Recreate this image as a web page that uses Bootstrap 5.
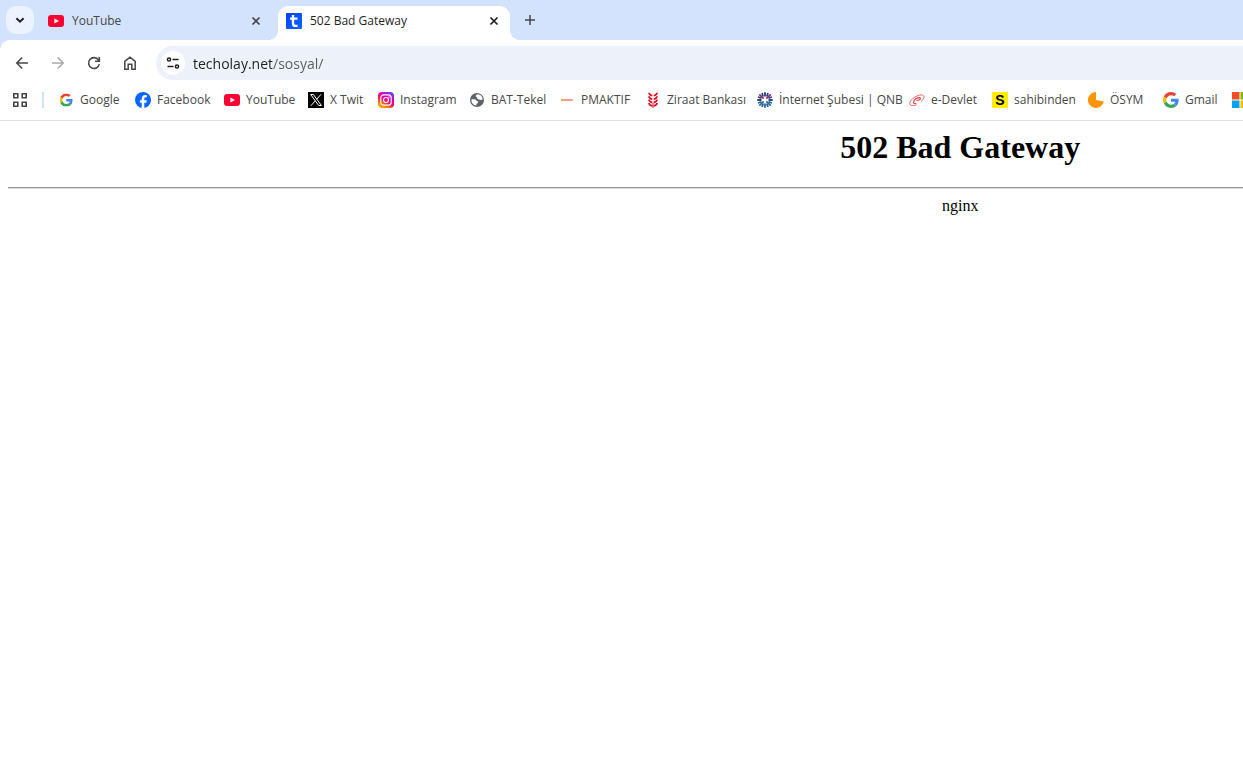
<!DOCTYPE html>
<html lang="tr">
<head>
<meta charset="utf-8">
<meta name="viewport" content="width=device-width, initial-scale=1">
<title>502 Bad Gateway</title>
<link href="https://cdn.jsdelivr.net/npm/bootstrap@5.3.0/dist/css/bootstrap.min.css" rel="stylesheet">
<style>
  body { font-family: "Open Sans", "Noto Sans", sans-serif; font-size: 12px; line-height: 16px; color: #1f1f1f; overflow-x: hidden; background: #fff; }
  svg { display: block; flex: none; }
  .plain-btn { border: 0; background: none; padding: 0; color: #474747; display: flex; align-items: center; justify-content: center; flex: none; }
  .strip { background: #d3e3fd; height: 40px; padding: 6px 6px 0; }
  .tab-search { width: 28px; height: 28px; border-radius: 10px; background: #ecf3fe; color: #1f1f1f; }
  .browser-tab { width: 232px; height: 34px; padding: 0 8px 5px; color: #474747; }
  .browser-tab.first { margin: 0 6px; }
  .browser-tab.current { background: #fff; color: #1f1f1f; border-radius: 10px 10px 0 0; position: relative; }
  .browser-tab.current .plain-btn { color: #1f1f1f; }
  .browser-tab.current::before, .browser-tab.current::after { content: ""; position: absolute; bottom: 0; width: 10px; height: 10px; }
  .browser-tab.current::before { right: 100%; background: radial-gradient(circle at 0 0, transparent 10px, #fff 10px); }
  .browser-tab.current::after { left: 100%; background: radial-gradient(circle at 100% 0, transparent 10px, #fff 10px); }
  .tab-text { margin-left: 8px; }
  .close-tab { width: 16px; height: 16px; }
  .new-tab { width: 28px; height: 28px; margin-left: 6px; }
  .toolbar-wrap { background: #d3e3fd; }
  .tools { background: #fff; border-radius: 10px 0 0 0; height: 40px; padding: 6px 0 0 8px; }
  .tool { width: 28px; height: 34px; margin-right: 8px; }
  .tool:disabled { color: #ababab; }
  .omnibox { height: 34px; background: #ecf1fa; border-radius: 17px 0 0 17px; padding-left: 5px; margin-left: 4px; }
  .site-info { width: 24px; height: 24px; border-radius: 50%; background: #fff; color: #1f1f1f; }
  .address { border: 0; outline: 0; padding: 0; margin-left: 8px; height: 20px; font-size: 14px; font-family: "Open Sans", sans-serif;
    background: linear-gradient(90deg, #1f1f1f 79px, #5c5c5c 79px); -webkit-background-clip: text; background-clip: text; -webkit-text-fill-color: transparent; }
  .bookmarks { height: 41px; border-bottom: 1px solid #e0e0e0; padding-left: 12px; overflow: hidden; }
  .divider { width: 2px; height: 16px; background: #d3e3fd; margin: 0 14px; flex: none; }
  .marks { display: grid; grid-template-columns: 77px 89px 84px 70px 91px 90px 86px 112px 152px 83px 96px 75px 69px 90px; flex: none; }
  .marks a { display: flex; align-items: center; gap: 6px; color: #474747; text-decoration: none; white-space: nowrap; }
  .page { width: 154.5%; padding: 8px; font-family: "Liberation Serif", serif; font-size: 16px; line-height: 18px; color: #000; }
  .page h1 { font-size: 32px; line-height: 37px; font-weight: 700; margin: 0 0 21px; }
  .page hr { margin: 0 0 8px; border: 0; border-top: 1px solid #9a9a9a; border-bottom: 1px solid #d8d8d8; height: 2px; opacity: 1; }
</style>
</head>
<body>
<svg width="0" height="0" class="position-absolute" aria-hidden="true">
  <defs>
    <symbol id="yt" viewBox="0 0 16 16"><rect y="2" width="16" height="12" rx="3" fill="#f03"/><path d="M6.4 5.4v5.2L10.9 8z" fill="#fff"/></symbol>
    <symbol id="goog" viewBox="0 0 48 48"><path fill="#ea4335" d="M24 9.5c3.54 0 6.71 1.22 9.21 3.6l6.85-6.85C35.9 2.38 30.47 0 24 0 14.62 0 6.51 5.38 2.56 13.22l7.98 6.19C12.43 13.72 17.74 9.5 24 9.5z"/><path fill="#4285f4" d="M46.98 24.55c0-1.57-.15-3.09-.38-4.55H24v9.02h12.94c-.58 2.96-2.26 5.48-4.78 7.18l7.73 6c4.51-4.18 7.09-10.36 7.09-17.65z"/><path fill="#fbbc05" d="M10.53 28.59a14.5 14.5 0 0 1 0-9.18l-7.98-6.19a24 24 0 0 0 0 21.56z"/><path fill="#34a853" d="M24 48c6.48 0 11.93-2.13 15.89-5.81l-7.73-6c-2.15 1.45-4.92 2.3-8.16 2.3-6.26 0-11.57-4.22-13.47-9.91l-7.98 6.19C6.51 42.62 14.62 48 24 48z"/></symbol>
    <symbol id="cross" viewBox="0 0 16 16"><path d="m4.5 4.5 7 7m0-7-7 7" stroke="currentColor" stroke-width="1.7"/></symbol>
    <linearGradient id="ig" x1="0" y1="1" x2=".6" y2="0"><stop stop-color="#ffc800"/><stop offset=".3" stop-color="#ff7a00"/><stop offset=".55" stop-color="#ff0169"/><stop offset=".8" stop-color="#d300c5"/><stop offset="1" stop-color="#7638fa"/></linearGradient>
    <linearGradient id="tb" x1="0" y1="0" x2="1" y2="1"><stop stop-color="#0b3bff"/><stop offset="1" stop-color="#0a68ff"/></linearGradient>
  </defs>
</svg>

<header>
  <div class="strip d-flex">
    <button class="plain-btn tab-search" aria-label="Sekme ara"><svg width="16" height="16" viewBox="0 0 16 16"><path d="m4.4 6.3 3.6 3.5 3.6-3.5" fill="none" stroke="currentColor" stroke-width="1.9"/></svg></button>
    <div class="browser-tab first d-flex align-items-center">
      <svg width="16" height="16"><use href="#yt"/></svg><span class="tab-text flex-fill">YouTube</span>
      <button class="plain-btn close-tab" aria-label="Kapat"><svg width="16" height="16"><use href="#cross"/></svg></button>
    </div>
    <div class="browser-tab current d-flex align-items-center">
      <svg width="16" height="16" viewBox="0 0 16 16"><rect width="16" height="16" rx="1" fill="url(#tb)"/><path d="M7 2v8.200q0 2.700 2.500 2.700H11.500M4 5.600h7.500" fill="none" stroke="#fff" stroke-width="2.400"/></svg><span class="tab-text flex-fill">502 Bad Gateway</span>
      <button class="plain-btn close-tab" aria-label="Kapat"><svg width="16" height="16"><use href="#cross"/></svg></button>
    </div>
    <button class="plain-btn new-tab" aria-label="Yeni sekme"><svg width="16" height="16" viewBox="0 0 16 16"><path d="M8 3v10M3 8h10" stroke="currentColor" stroke-width="1.5"/></svg></button>
  </div>

  <div class="toolbar-wrap">
    <div class="tools d-flex align-items-center">
      <button class="plain-btn tool" aria-label="Geri"><svg width="16" height="16" viewBox="0 0 16 16"><path d="M14 8H3M8.2 2.5 2.8 8l5.4 5.5" fill="none" stroke="currentColor" stroke-width="1.6"/></svg></button>
      <button class="plain-btn tool" disabled aria-label="İleri"><svg width="16" height="16" viewBox="0 0 16 16"><path d="M2 8h11M7.8 2.5 13.2 8l-5.4 5.5" fill="none" stroke="currentColor" stroke-width="1.6"/></svg></button>
      <button class="plain-btn tool" aria-label="Yenile"><svg width="16" height="16" viewBox="0 0 16 16"><path d="M13.3 9.2A5.4 5.4 0 1 1 12.4 4.9L13.3 6M13.3 2v4.300H9" fill="none" stroke="currentColor" stroke-width="1.6"/></svg></button>
      <button class="plain-btn tool" aria-label="Ana sayfa"><svg width="16" height="16" viewBox="0 0 16 16"><path d="M2.800 6.300 8 2.200l5.200 4.100v7.900H9.800V9.300H6.200v4.900H2.800z" fill="none" stroke="currentColor" stroke-width="1.500"/></svg></button>
      <div class="omnibox d-flex align-items-center flex-fill">
        <button class="plain-btn site-info" aria-label="Site bilgileri"><svg width="16" height="16" viewBox="0 0 16 16" fill="none" stroke="currentColor" stroke-width="1.500"><circle cx="4" cy="4.500" r="1.600"/><path d="M7.500 4.500H13.500M2.500 11.500h6"/><circle cx="12" cy="11.500" r="1.600"/></svg></button>
        <input class="address flex-fill" type="text" value="techolay.net/sosyal/" aria-label="Adres çubuğu">
      </div>
    </div>
  </div>

  <nav class="bookmarks d-flex align-items-center" aria-label="Yer işaretleri">
    <button class="plain-btn" aria-label="Uygulamalar"><svg width="16" height="16" viewBox="0 0 16 16" fill="none" stroke="currentColor" stroke-width="1.600"><path d="M1.800 1.800h4v4h-4zM10.200 1.800h4v4h-4zM1.800 10.200h4v4h-4zM10.200 10.200h4v4h-4z"/></svg></button>
    <span class="divider"></span>
    <div class="marks">
      <a href="#"><svg width="16" height="16" viewBox="-6 -5 58 58"><use href="#goog" width="48" height="48"/></svg>Google</a>
      <a href="#"><svg width="16" height="16" viewBox="0 0 16 16"><circle cx="8" cy="8" r="8" fill="#0866ff"/><path d="M6.700 16v-5.200H4.900V8.200h1.800V7c0-2.700 1.200-4 3.700-4 .5 0 1.200.1 1.500.2v2.200l-.9-.1c-1.300 0-1.700.5-1.700 1.700v1.200h2.500l-.5 2.600h-2V16z" fill="#fff"/></svg>Facebook</a>
      <a href="#"><svg width="16" height="16"><use href="#yt"/></svg>YouTube</a>
      <a href="#"><svg width="16" height="16" viewBox="0 0 16 16"><path fill="#000" d="M0 0h16v16H0z"/><path d="M2.700 2.500h2.700l8 11h-2.700zM13 2.300 8.700 7.300M7.200 8.900l-4.400 4.900" fill="none" stroke="#fff" stroke-width="1"/></svg>X Twit</a>
      <a href="#"><svg width="16" height="16" viewBox="0 0 16 16"><rect width="16" height="16" rx="4" fill="url(#ig)"/><rect x="2.800" y="2.800" width="10.400" height="10.400" rx="3" fill="none" stroke="#fff" stroke-width="1.200"/><circle cx="8" cy="8" r="2.500" fill="none" stroke="#fff" stroke-width="1.200"/><circle cx="11" cy="5" r=".7" fill="#fff"/></svg>Instagram</a>
      <a href="#"><svg width="16" height="16" viewBox="0 0 16 16"><circle cx="8" cy="8" r="7" fill="#5f6368"/><path d="M8.500 2.200C6.500 3 6 4.400 7.500 4.900c1.500.5.200 1.500 1.300 2.200 1.300.8 2.700 1.200 4.900.5A5.600 5.600 0 0 0 8.500 2.200zM2.400 7.400c1.500 0 4.200-.3 5 1 .6 1 2 .6 1.900 1.900-.1 1-1.600.8-1.800 1.700-.1.700 0 1.200-.5 1.600A5.700 5.700 0 0 1 2.400 7.400z" fill="#fff"/></svg>BAT-Tekel</a>
      <a href="#"><svg width="16" height="16" viewBox="0 0 16 16"><path d="M2 7.200h12V8l-.5.800H2z" fill="#ee7b68"/><path d="M2 7.200h3v1.600H2z" fill="#f5a45a"/></svg>PMAKTIF</a>
      <a href="#"><svg width="16" height="16" viewBox="0 0 16 16"><g fill="none" stroke="#e30a20" stroke-width="1.700"><path d="M4 .8q0 2 3.300 3M4 4.200q0 2 3.300 3M4 7.600q0 2 3.300 3M4 11q0 2 3.300 3M12 .8q0 2-3.300 3M12 4.200q0 2-3.300 3M12 7.600q0 2-3.300 3M12 11q0 2-3.300 3"/></g><path d="M7.500 11h1v5h-1z" fill="#e30a20"/></svg>Ziraat Bankası</a>
      <a href="#"><svg width="16" height="16" viewBox="0 0 16 16"><g fill="none" stroke-width="1.800"><path d="M8 .3v4.200M5 1l1.200 3.500M11 1 9.800 4.500M1 5l3.500 1.200M.3 8h4.200M15 5l-3.500 1.200M15.700 8h-4.200" stroke="#2d4377"/><path d="M1 11l3.500-1.200M15 11l-3.500-1.200M5 15l1.200-3.500M8 15.700v-4.200M11 15l-1.200-3.500" stroke="#2a6299"/><path d="m2.300 2.300 4.400 4.400M13.700 2.300 9.300 6.700" stroke="#8d3168"/><path d="m2.300 13.700 4.400-4.400M13.700 13.700 9.300 9.300" stroke="#256da8"/></g></svg>İnternet Şubesi | QNB</a>
      <a href="#"><svg width="16" height="16" viewBox="0 0 16 16" fill="none" stroke="#ea3f45"><path d="M7.500 8.400c2.500.1 4.300-1 3.800-2.100-.6-1.300-4.300-.3-6 2s-.6 3.800 2 3.200" stroke-width="1.300"/><path d="M12 9.500c4-3.200 4-6.700.4-6.600C8 3 1.300 7.300.8 11c-.3 2.800 3.200 3.200 6.500 1.900" stroke-width=".8"/></svg>e-Devlet</a>
      <a href="#"><svg width="16" height="16" viewBox="0 0 16 16"><path fill="#ffed00" d="M0 0h16v16H0z"/><text x="8" y="13" text-anchor="middle" font-family="Liberation Sans, sans-serif" font-size="14" font-weight="700">S</text></svg>sahibinden</a>
      <a href="#"><svg width="16" height="16" viewBox="0 0 16 16"><path d="M8 0v8l7.800 1.600A8 8 0 1 1 8 0z" fill="#ff9300"/></svg>ÖSYM</a>
      <a href="#"><svg width="16" height="16"><use href="#goog"/></svg>Gmail</a>
      <a href="#" aria-label="Microsoft"><svg width="16" height="16" viewBox="0 0 16 16"><path fill="#f25022" d="M0 0h7.500v7.500H0z"/><path fill="#7fba00" d="M8.500 0H16v7.500H8.500z"/><path fill="#00a4ef" d="M0 8.500h7.500V16H0z"/><path fill="#ffb900" d="M8.500 8.500H16V16H8.500z"/></svg></a>
    </div>
  </nav>
</header>

<main class="page text-center">
  <h1>502 Bad Gateway</h1>
  <hr>
  <div>nginx</div>
</main>
<script src="https://cdn.jsdelivr.net/npm/bootstrap@5.3.0/dist/js/bootstrap.bundle.min.js"></script>
</body>
</html>
